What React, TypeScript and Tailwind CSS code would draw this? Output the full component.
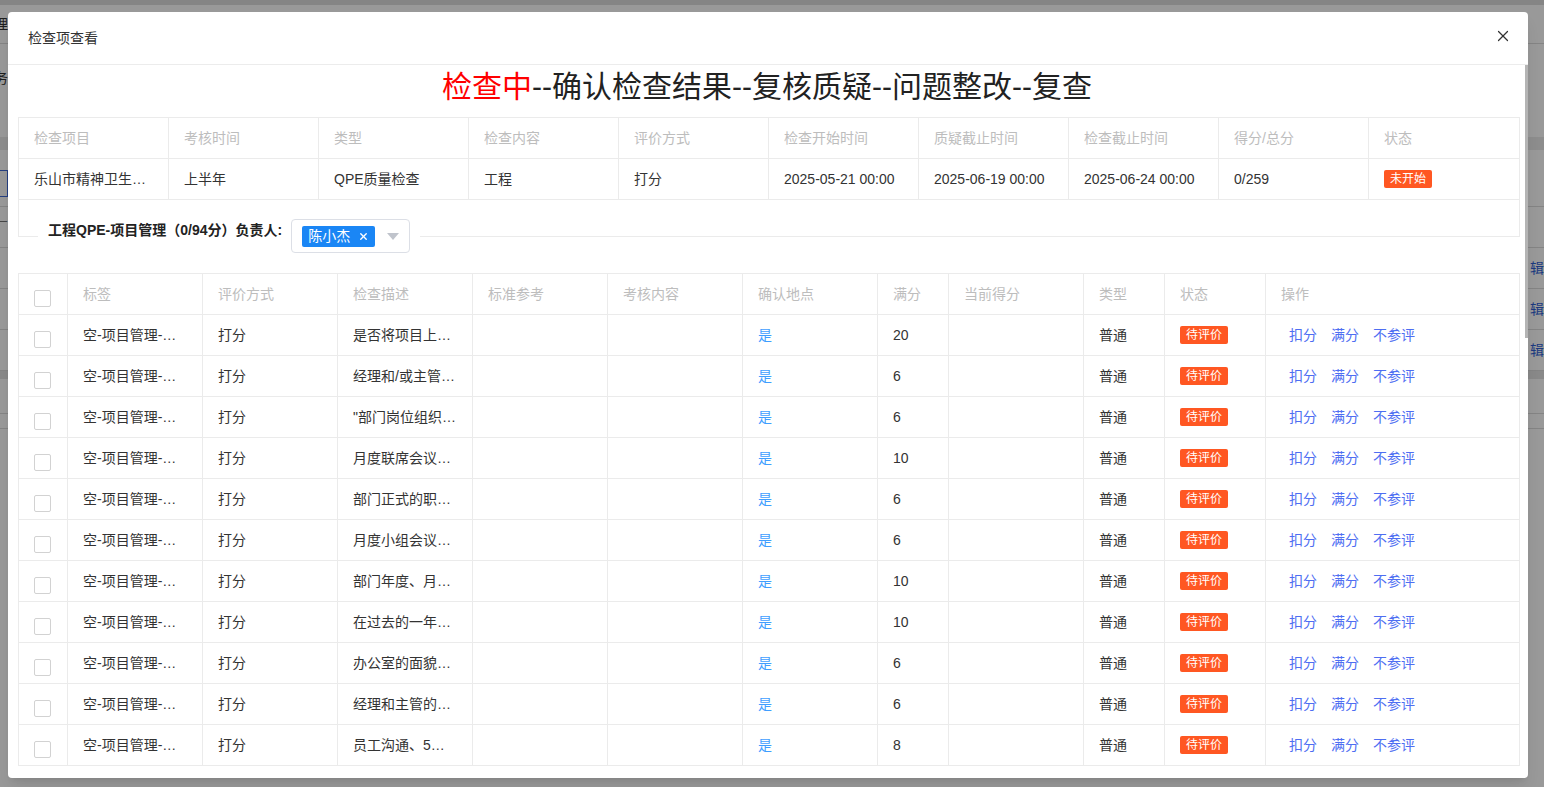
import React from "react";
import { X } from "lucide-react";

const summaryHead = [
  "检查项目",
  "考核时间",
  "类型",
  "检查内容",
  "评价方式",
  "检查开始时间",
  "质疑截止时间",
  "检查截止时间",
  "得分/总分",
  "状态",
];

const summaryRow = [
  "乐山市精神卫生中心",
  "上半年",
  "QPE质量检查",
  "工程",
  "打分",
  "2025-05-21 00:00",
  "2025-06-19 00:00",
  "2025-06-24 00:00",
  "0/259",
];

const itemHead = [
  "标签",
  "评价方式",
  "检查描述",
  "标准参考",
  "考核内容",
  "确认地点",
  "满分",
  "当前得分",
  "类型",
  "状态",
  "操作",
];

const items = [
  { desc: "是否将项目上墙公示", full: 20 },
  { desc: "经理和/或主管每周巡查", full: 6 },
  { desc: "\"部门岗位组织架构图", full: 6 },
  { desc: "月度联席会议记录", full: 10 },
  { desc: "部门正式的职责说明", full: 6 },
  { desc: "月度小组会议记录", full: 6 },
  { desc: "部门年度、月度计划", full: 10 },
  { desc: "在过去的一年中是否", full: 10 },
  { desc: "办公室的面貌整洁", full: 6 },
  { desc: "经理和主管的培训", full: 6 },
  { desc: "员工沟通、5天内反馈", full: 8 },
];

const Checkbox = () => (
  <span className="mt-2 block h-[17px] w-[17px] rounded-[2px] border border-[#d2d2d2] bg-white" />
);

const Badge = ({ text }: { text: string }) => (
  <span className="inline-flex h-[18px] items-center rounded-[2px] bg-[#ff5722] px-[6px] text-xs leading-none text-white">
    {text}
  </span>
);

// dimmed page behind the dialog, only its edges show
const BackgroundPage = () => {
  const edge = (left: React.ReactNode, right?: React.ReactNode) => (
    <div className="flex w-full items-center justify-between">
      <div className="flex w-[8px] justify-end overflow-hidden whitespace-nowrap">{left}</div>
      <div className="w-[14px] overflow-hidden whitespace-nowrap">{right}</div>
    </div>
  );
  return (
    <div className="flex flex-col text-sm text-[#333]">
      <div className="h-[5px] bg-[#dedede]" />
      <div className="flex h-[39px] items-center border-b border-[#dcdcdc]">{edge(<span>管理</span>)}</div>
      <div className="flex h-[93px] items-start pt-[24px]">{edge(<span>业务</span>)}</div>
      <div className="h-[13px] bg-[#ececec]" />
      <div className="flex h-[57px] items-start border-b border-[#dcdcdc] pt-[20px]">
        {edge(
          <span className="flex h-[27px] items-center border border-[#3f6ad8] px-2 text-[#3f6ad8]">新添</span>
        )}
      </div>
      <div className="flex h-[41px] items-center border-b border-[#dcdcdc]">{edge(<span className="text-[#777]">厂</span>)}</div>
      {[0, 1, 2].map((i) => (
        <div key={i} className="flex h-[41px] items-center border-b border-[#dcdcdc]">
          {edge(<span />, <span className="text-[#2f5fd6]">辑编</span>)}
        </div>
      ))}
      <div className="h-[8px] bg-[#e4e4e4]" />
      <div className="h-[35px] border-b border-[#dcdcdc]" />
      <div className="h-[15px] border-b border-[#dcdcdc]" />
    </div>
  );
};

const App = () => {
  return (
    <div className="relative h-[787px] w-full overflow-hidden bg-white font-['Liberation_Sans','Noto_Sans_CJK_SC',sans-serif]">
      <BackgroundPage />
      <div className="absolute inset-0 bg-black/40" />

      <div className="absolute left-[8px] top-[12px] flex h-[766px] w-[1520px] flex-col overflow-hidden rounded-[4px] bg-white shadow-lg">
        <div className="flex h-[53px] shrink-0 items-center justify-between border-b border-[#ececec] pl-5 pr-[16px]">
          <span className="text-sm text-[#333]">检查项查看</span>
          <X className="mb-[4px] h-[18px] w-[18px] text-[#333]" strokeWidth={1.6} />
        </div>

        <div className="relative flex-1 overflow-hidden pl-[10px] pr-[8px]">
          <div className="flex h-[52px] justify-center pt-[4px]">
            <h1 className="-ml-[4px] text-[30px] leading-[36px] text-[#222]">
              <span className="text-[#ff0000]">检查中</span>--确认检查结果--复核质疑--问题整改--复查
            </h1>
          </div>

          <div className="w-[1502px] border-l border-t border-[#ebebeb] text-sm">
            <div className="grid h-[41px] grid-cols-[repeat(9,150px)_151px] border-b border-[#ebebeb]">
              {summaryHead.map((h) => (
                <div key={h} className="flex items-center border-r border-[#ebebeb] px-[15px] text-[#bdbdbd]">
                  {h}
                </div>
              ))}
            </div>
            <div className="grid h-[41px] grid-cols-[repeat(9,150px)_151px] border-b border-[#ebebeb] text-[#333]">
              {summaryRow.map((v, i) => (
                <div key={i} className="flex items-center border-r border-[#ebebeb] px-[15px]">
                  <span className="truncate">{v}</span>
                </div>
              ))}
              <div className="flex items-center border-r border-[#ebebeb] px-[15px]">
                <Badge text="未开始" />
              </div>
            </div>
          </div>

          <div className="h-[37px] w-[1502px] border-x border-[#ebebeb]" />

          <fieldset className="-mt-[18px] w-[1502px] border-t border-[#ebebeb]">
            <legend className="ml-[20px] px-[10px]">
              <div className="flex items-center">
                <span className="-mt-[12px] text-sm font-bold text-[#222]">工程QPE-项目管理（0/94分）负责人:</span>
                <div className="ml-[9px] flex h-[34px] w-[119px] items-center justify-between rounded-[4px] border border-[#dcdfe6] pl-[10px] pr-[10px]">
                  <span className="flex h-[21px] items-center gap-[8px] rounded-[2px] bg-[#1a86f5] pl-[6px] pr-[6px] text-sm text-white">
                    陈小杰
                    <X className="h-[11px] w-[11px]" strokeWidth={3} />
                  </span>
                  <svg width="12" height="7" viewBox="0 0 12 7">
                    <path d="M0 0 L12 0 L6 7 Z" fill="#c0c4cc" />
                  </svg>
                </div>
              </div>
            </legend>

            <div className="pt-[20px]">
              <div className="w-[1502px] border-l border-t border-[#ebebeb] text-sm">
                <div className="grid h-[41px] grid-cols-[49px_135px_135px_135px_135px_135px_135px_71px_135px_81px_101px_254px] border-b border-[#ebebeb]">
                  <div className="flex items-center border-r border-[#ebebeb] px-[15px]">
                    <Checkbox />
                  </div>
                  {itemHead.map((h) => (
                    <div key={h} className="flex items-center border-r border-[#ebebeb] px-[15px] text-[#bdbdbd]">
                      {h}
                    </div>
                  ))}
                </div>

                {items.map((it, i) => (
                  <div
                    key={i}
                    className="grid h-[41px] grid-cols-[49px_135px_135px_135px_135px_135px_135px_71px_135px_81px_101px_254px] border-b border-[#ebebeb] text-[#333]"
                  >
                    <div className="flex items-center border-r border-[#ebebeb] px-[15px]">
                      <Checkbox />
                    </div>
                    <div className="flex min-w-0 items-center border-r border-[#ebebeb] px-[15px]">
                      <span className="truncate">空-项目管理-组织架构</span>
                    </div>
                    <div className="flex items-center border-r border-[#ebebeb] px-[15px]">打分</div>
                    <div className="flex min-w-0 items-center border-r border-[#ebebeb] px-[15px]">
                      <span className="truncate">{it.desc}</span>
                    </div>
                    <div className="border-r border-[#ebebeb]" />
                    <div className="border-r border-[#ebebeb]" />
                    <div className="flex items-center border-r border-[#ebebeb] px-[15px] text-[#409eff]">是</div>
                    <div className="flex items-center border-r border-[#ebebeb] px-[15px]">{it.full}</div>
                    <div className="border-r border-[#ebebeb]" />
                    <div className="flex items-center border-r border-[#ebebeb] px-[15px]">普通</div>
                    <div className="flex items-center border-r border-[#ebebeb] px-[15px]">
                      <Badge text="待评价" />
                    </div>
                    <div className="flex items-center gap-[14px] border-r border-[#ebebeb] pl-[23px] text-[#4e6ef2]">
                      <span>扣分</span>
                      <span>满分</span>
                      <span>不参评</span>
                    </div>
                  </div>
                ))}
              </div>
            </div>
          </fieldset>

          <div className="absolute right-0 top-0 h-[273px] w-[3px] bg-[#b4b4b4]" />
        </div>
      </div>
    </div>
  );
};

export default App;
